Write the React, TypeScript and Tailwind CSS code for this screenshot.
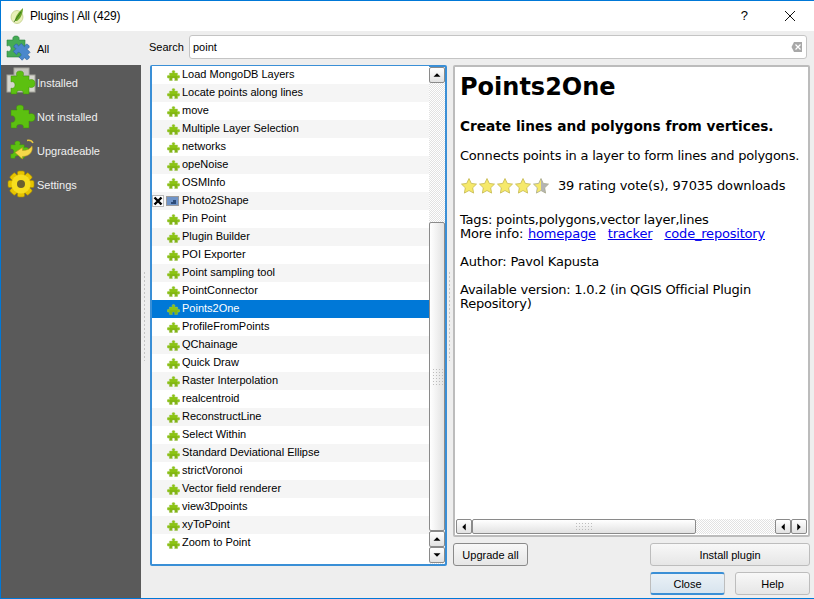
import { ReactNode } from "react";

const PUZZLE =
  "M6.2 3.2C6.2 1.4 9.8 1.4 9.8 3.2C9.8 4 9.3 4.4 9.3 5H13V8.2C13.5 8.2 13.9 7.7 14.6 7.7C16.2 7.7 16.2 11.3 14.6 11.3C13.9 11.3 13.5 10.8 13 10.8V14H9.3C9.3 13.4 9.8 13 9.8 12.3C9.8 10.6 6.2 10.6 6.2 12.3C6.2 13 6.7 13.4 6.7 14H3V10.8C2.5 10.8 2.1 11.3 1.4 11.3C-.2 11.3 -.2 7.7 1.4 7.7C2.1 7.7 2.5 8.2 3 8.2V5H6.7C6.7 4.4 6.2 4 6.2 3.2Z";

// bigger piece used in the sidebar: top and right knobs, left and bottom notches
const BIG_PIECE =
  "M5 9H11C10 7 10 4 14 4C18 4 18 7 17 9H23V13C25 12 29 12 29 16.5C29 21 25 21 23 20V27H17C18 25 17 23.5 14 23.5C11 23.5 10 25 11 27H5V21C7 22 9 20.5 9 18C9 15.5 7 14 5 15Z";

const plugins = [
  "Load MongoDB Layers",
  "Locate points along lines",
  "move",
  "Multiple Layer Selection",
  "networks",
  "opeNoise",
  "OSMInfo",
  "Photo2Shape",
  "Pin Point",
  "Plugin Builder",
  "POI Exporter",
  "Point sampling tool",
  "PointConnector",
  "Points2One",
  "ProfileFromPoints",
  "QChainage",
  "Quick Draw",
  "Raster Interpolation",
  "realcentroid",
  "ReconstructLine",
  "Select Within",
  "Standard Deviational Ellipse",
  "strictVoronoi",
  "Vector field renderer",
  "view3Dpoints",
  "xyToPoint",
  "Zoom to Point",
];

const Piece = () => (
  <svg width="13" height="13" viewBox="0 0 16 16" className="shrink-0">
    <path d={PUZZLE} fill="#8cc414" stroke="#a8c860" strokeWidth="0.5" />
    <path d="M3 9h10v5H9.3c0-.6.5-1 .5-1.7 0-1.7-3.6-1.7-3.6 0 0 .7.5 1.1.5 1.7H3Z" fill="#6f9c10" opacity="0.35" />
  </svg>
);

const AllIcon = () => (
  <svg width="30" height="30" viewBox="0 0 30 30">
    <path d="M1 7H7C6.500 5 7 3 10 3C13 3 13.500 5 13 7H19V24H1V18C3 19 5 18 5 15.500C5 13 3 12 1 13Z" fill="#45ab55" stroke="#2e8040" strokeWidth="0.6" />
    <g transform="translate(7 7.500) scale(1.25) rotate(45 8 8)">
      <path d={PUZZLE} fill="#4a88cc" stroke="#2f62a0" strokeWidth="0.5" />
    </g>
  </svg>
);

const InstalledIcon = () => (
  <svg width="30" height="30" viewBox="0 0 30 30">
    <rect x="1" y="8" width="28" height="17" fill="#d6d6ce" stroke="#a4a49c" />
    <rect x="8" y="1" width="15" height="8" fill="#c4c4bc" stroke="#a4a49c" />
    <path d={BIG_PIECE} fill="#5cc010" stroke="#3f8f08" strokeWidth="0.5" />
  </svg>
);

const NotInstalledIcon = () => (
  <svg width="30" height="30" viewBox="0 0 30 30">
    <path d={BIG_PIECE} fill="#5cc010" stroke="#3f8f08" strokeWidth="0.5" />
  </svg>
);

const UpgradeIcon = () => (
  <svg width="30" height="30" viewBox="0 0 30 30">
    <g transform="translate(1 3) scale(0.75)">
      <path d={BIG_PIECE} fill="#5cc010" stroke="#3f8f08" strokeWidth="0.6" />
    </g>
    <path d="M9 17.500L16.500 12.500V15.500C21 15.500 24 14 26 11C27.500 17 23 21.500 16.500 21.500V24Z" fill="#f4d84a" stroke="#b8961e" strokeWidth="0.6" />
    <path d="M21 5.500C24 5 26 6 27 8" stroke="#e8c840" strokeWidth="1.500" fill="none" />
  </svg>
);

const GearIcon = () => (
  <svg width="30" height="30" viewBox="0 0 30 30">
    <g fill="#e6c400" stroke="#a88c00" strokeWidth="0.6">
      <rect x="11.500" y="2" width="7" height="26" rx="1.500" />
      <rect x="11.500" y="2" width="7" height="26" rx="1.500" transform="rotate(45 15 15)" />
      <rect x="11.500" y="2" width="7" height="26" rx="1.500" transform="rotate(90 15 15)" />
      <rect x="11.500" y="2" width="7" height="26" rx="1.500" transform="rotate(135 15 15)" />
    </g>
    <circle cx="15" cy="15" r="9.500" fill="#f6dd1e" />
    <circle cx="15" cy="15" r="4" fill="#6a6030" />
  </svg>
);

const QgisLogo = () => (
  <svg width="18" height="18" viewBox="0 0 18 18">
    <ellipse cx="8" cy="10" rx="6" ry="6.500" fill="#e8f0b8" stroke="#bcc880" strokeWidth="0.7" />
    <path d="M6 14C6 9 10 5 14 1C14 6 12 11 8 14Z" fill="#6aa52a" />
    <path d="M5 15L12 5" stroke="#2f6b16" strokeWidth="0.8" />
  </svg>
);

const Star = ({ half }: { half?: boolean }) => (
  <svg width="18" height="18" viewBox="0 0 18 18" className="shrink-0">
    <defs>
      <linearGradient id="halfStar">
        <stop offset="50%" stopColor="#f6e96a" />
        <stop offset="50%" stopColor="#b4b4b4" />
      </linearGradient>
    </defs>
    <path
      d="M9 1.500l2.300 4.900 5.200.7-3.800 3.700.9 5.300L9 13.500l-4.600 2.600.9-5.300L1.500 7.100l5.200-.7Z"
      fill={half ? "url(#halfStar)" : "#f6e96a"}
      stroke={half ? "#a8a88a" : "#c4b84c"}
      strokeWidth="0.8"
    />
  </svg>
);

const NavItem = ({ icon, label, active }: { icon: ReactNode; label: string; active?: boolean }) => (
  <div className={`flex h-[34px] items-center ${active ? "bg-[#eeeeee] text-black" : "text-[#f0f0f0]"}`}>
    <div className="ml-[4px] flex w-[32px] shrink-0 items-center justify-center">{icon}</div>
    <span className="pt-[2px] text-[11px]">{label}</span>
  </div>
);

const ArrowBtn = ({ dir, h = "h-[16px]" }: { dir: "up" | "down" | "left" | "right"; h?: string }) => {
  const d = { up: "M4 10l4-4 4 4Z", down: "M4 6l4 4 4-4Z", left: "M10 4l-4 4 4 4Z", right: "M6 4l4 4-4 4Z" }[dir];
  return (
    <div className={`flex ${h} w-[16px] shrink-0 items-center justify-center rounded-[2px] border border-[#8a8a8a] bg-gradient-to-b from-white to-[#e2e2e2]`}>
      <svg width="14" height="14" viewBox="0 0 16 16"><path d={d} fill="#000" /></svg>
    </div>
  );
};

const Btn = ({ children, className = "" }: { children: ReactNode; className?: string }) => (
  <button className={`h-[23px] rounded-[3px] border border-[#bdbdbd] bg-gradient-to-b from-[#f8f8f8] to-[#e6e6e6] pt-[1px] text-[11px] text-black ${className}`}>
    {children}
  </button>
);

const Grip = () => (
  <div className="h-[90px] w-[3px] bg-[radial-gradient(#c4c4c4_1px,transparent_1px)] bg-[length:3px_4px]" />
);

const PluginRow = ({ name, index }: { name: string; index: number }) => {
  const selected = name === "Points2One";
  const striped = index % 2 === 1;
  return (
    <div className={`flex h-[18px] items-center ${selected ? "bg-[#0078d7] text-white" : striped ? "bg-[#f5f5f5]" : "bg-white"}`}>
      {name === "Photo2Shape" ? (
        <>
          <div className="ml-[0px] flex h-[12px] w-[12px] items-center justify-center border border-[#bbbbbb] bg-white">
            <svg width="10" height="10" viewBox="0 0 10 10"><path d="M1.500 1.500l7 7M8.500 1.500l-7 7" stroke="#000" strokeWidth="2.400" /></svg>
          </div>
          <svg width="13" height="12" viewBox="0 0 13 12" className="ml-[2px] mr-[3px]">
            <rect x="0.500" y="1.500" width="12" height="9" fill="#6f94c8" stroke="#9a9a9a" />
            <path d="M3 9h2V7h2V5h3v4Z" fill="#2b4a78" />
          </svg>
        </>
      ) : (
        <div className="ml-[15px] mr-[2px]">
          <Piece />
        </div>
      )}
      <span className="whitespace-nowrap pb-[1px] text-[11px] leading-none">{name}</span>
    </div>
  );
};

const App = () => {
  return (
    <div className="flex h-[599px] w-[814px] flex-col overflow-hidden border border-r-0 border-[#0078d7] bg-[#eeeeee] font-['Liberation_Sans',sans-serif]">
      {/* title bar */}
      <div className="flex h-[30px] shrink-0 items-center bg-white">
        <div className="ml-[8px] mr-[3px]"><QgisLogo /></div>
        <span className="text-[12px] tracking-[-0.15px] text-black">Plugins | All (429)</span>
        <span className="ml-auto mr-[36px] text-[13px] text-black">?</span>
        <svg width="12" height="12" viewBox="0 0 12 12" className="mr-[18px]">
          <path d="M1 1l10 10M11 1L1 11" stroke="#111" strokeWidth="1" />
        </svg>
      </div>

      <div className="flex min-h-0 flex-1">
        {/* sidebar */}
        <div className="flex w-[140px] shrink-0 flex-col bg-[#5a5a5a]">
          <NavItem icon={<AllIcon />} label="All" active />
          <NavItem icon={<InstalledIcon />} label="Installed" />
          <NavItem icon={<NotInstalledIcon />} label="Not installed" />
          <NavItem icon={<UpgradeIcon />} label="Upgradeable" />
          <NavItem icon={<GearIcon />} label="Settings" />
        </div>

        {/* main */}
        <div className="flex min-w-0 flex-1 flex-col pl-[2px] pr-[4px]">
          <div className="mt-[4px] flex h-[24px] shrink-0 items-center">
            <span className="ml-[6px] w-[40px] text-[11px]">Search</span>
            <div className="flex h-[24px] w-[618px] items-center justify-between rounded-[3px] border border-[#c4c4c4] bg-white pl-[3px] pr-[3px]">
              <span className="text-[11px]">point</span>
              <svg width="12" height="12" viewBox="0 0 12 12">
                <path d="M3 1h8v10H3L0.500 6Z" fill="#a8a8a8" />
                <path d="M4.500 3.500l5 5M9.500 3.500l-5 5" stroke="#fff" strokeWidth="1.200" />
              </svg>
            </div>
          </div>

          <div className="mt-[6px] flex h-[501px] shrink-0">
            <div className="flex items-center"><Grip /></div>
            <div className="ml-[4px] flex h-[501px] w-[297px] shrink-0 rounded-[2px] border-2 border-[#3a8fd6] bg-white">
              <div className="-mt-[1px] min-w-0 flex-1">
                {plugins.map((name, i) => (
                  <PluginRow key={name} name={name} index={i} />
                ))}
              </div>
              <div className="flex w-[16px] shrink-0 flex-col bg-[conic-gradient(#e2e2e2_25%,#fff_0_50%,#e2e2e2_0_75%,#fff_0)] bg-[length:2px_2px]">
                <ArrowBtn dir="up" />
                <div className="h-[139px]" />
                <div className="flex h-[309px] items-center justify-center rounded-[2px] border border-[#8a8a8a] bg-gradient-to-r from-white to-[#e2e2e2]">
                  <div className="h-[17px] w-[11px] bg-[radial-gradient(#bdbdbd_1px,transparent_1px)] bg-[length:3px_3px]" />
                </div>
                <ArrowBtn dir="up" />
                <ArrowBtn dir="down" />
              </div>
            </div>
            <div className="ml-[1px] mr-[2px] flex w-[3px] items-center justify-center"><Grip /></div>

            {/* details */}
            <div className="flex w-[357px] shrink-0 flex-col self-stretch">
              <div className="flex h-[472px] flex-col rounded-[2px] border-2 border-[#bcbcbc] bg-white font-['DejaVu_Sans',sans-serif] text-black">
                <div className="min-h-0 flex-1 pl-[5px] pt-[3px] text-[13px] leading-[14px] tracking-[-0.2px]">
                  <h1 className="text-[24px] font-bold leading-[35px] tracking-normal">Points2One</h1>
                  <p className="mt-[13px] text-[13.7px] font-bold leading-[16px] tracking-normal">Create lines and polygons from vertices.</p>
                  <p className="mt-[14px] leading-[16px] tracking-[-0.22px]">Connects points in a layer to form lines and polygons.</p>
                  <div className="mt-[13px] flex h-[18px] items-center">
                    <Star /><Star /><Star /><Star /><Star half />
                    <span className="ml-[8px] tracking-[-0.15px]">39 rating vote(s), 97035 downloads</span>
                  </div>
                  <p className="mt-[18px]">Tags: points,polygons,vector layer,lines</p>
                  <p>
                    More info: <a className="ml-[1px] text-[#0000ee] underline">homepage</a>
                    <a className="ml-[12px] text-[#0000ee] underline">tracker</a>
                    <a className="ml-[12px] text-[#0000ee] underline">code_repository</a>
                  </p>
                  <p className="mt-[14px]">Author: Pavol Kapusta</p>
                  <p className="mt-[14px] w-[330px] tracking-[-0.25px]">Available version: 1.0.2 (in QGIS Official Plugin Repository)</p>
                </div>
                <div className="flex h-[16px] shrink-0 items-center bg-white px-[1px] pb-[1px]">
                  <ArrowBtn dir="left" h="h-[15px]" />
                  <div className="flex h-[15px] w-[224px] items-center justify-center rounded-[2px] border border-[#8a8a8a] bg-gradient-to-b from-white to-[#e2e2e2]">
                    <div className="h-[9px] w-[19px] bg-[radial-gradient(#bdbdbd_1px,transparent_1px)] bg-[length:3px_3px]" />
                  </div>
                  <div className="h-[15px] flex-1 bg-[conic-gradient(#e2e2e2_25%,#fff_0_50%,#e2e2e2_0_75%,#fff_0)] bg-[length:2px_2px]" />
                  <ArrowBtn dir="left" h="h-[15px]" />
                  <ArrowBtn dir="right" h="h-[15px]" />
                </div>
              </div>
              <div className="mt-[6px] flex justify-between">
                <Btn className="w-[75px] !border-[#8a8a8a]">Upgrade all</Btn>
                <Btn className="w-[160px]">Install plugin</Btn>
              </div>
            </div>
          </div>

          {/* footer buttons */}
          <div className="mt-[6px] flex justify-end gap-[10px] pr-[0px]">
            <Btn className="w-[75px] !border-x-[#bdbdbd] !border-y-2 !border-y-[#3a8fd6] !from-[#eaf1f7] !to-[#d8e4ee]">Close</Btn>
            <Btn className="w-[75px]">Help</Btn>
          </div>
        </div>
      </div>
    </div>
  );
};

export default App;
